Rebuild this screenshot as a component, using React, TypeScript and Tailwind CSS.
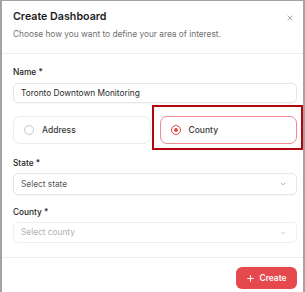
import React from "react";

function Chevron({ color }: { color: string }) {
  return (
    <svg width="6" height="6" viewBox="0 0 10 10">
      <path d="M2 3.5 L5 6.5 L8 3.5" stroke={color} strokeWidth="1.4" fill="none" strokeLinecap="round" strokeLinejoin="round" />
    </svg>
  );
}

export default function App() {
  return (
    <div
      className="w-[305px] h-[292px] bg-white border-t border-l-2 border-r-2 border-[#a3a3a3] flex flex-col overflow-hidden"
      style={{ fontFamily: "Inter, 'Noto Sans', sans-serif" }}
    >
      <div className="pl-[11px] pr-[6px] pt-[10px] h-[53px] border-b border-[#ececec] relative shrink-0">
        <div className="text-[10.7px] font-semibold text-[#1c1c1c] leading-[12px]">Create Dashboard</div>
        <div className="text-[8.3px] text-[#707070] leading-[12px] mt-[5px]">Choose how you want to define your area of interest.</div>
        <svg className="absolute left-[285px] top-[14px]" width="6" height="6" viewBox="0 0 10 10">
          <path d="M1.5 1.5 L8.5 8.5 M8.5 1.5 L1.5 8.5" stroke="#9a9a9a" strokeWidth="1.4" strokeLinecap="round" />
        </svg>
      </div>
      <div className="pl-[11px] pr-[6px] pt-[12px] h-[203px] flex flex-col shrink-0">
        <div className="text-[8.3px] font-medium text-[#222] leading-[12px]">Name *</div>
        <div className="mt-[5px] h-[20px] rounded-[5px] border border-[#e6e6e6] px-[7px] flex items-center text-[8.3px] text-[#2a2a2a] shadow-[0_1px_1px_rgba(0,0,0,0.03)]">
          Toronto Downtown Monitoring
        </div>
        <div className="mt-[13px] grid grid-cols-2 gap-[9px] relative">
          <div className="h-[28px] rounded-[7px] border border-[#ececec] flex items-center pl-[10px] gap-[8px]">
            <span className="w-[10px] h-[10px] rounded-full border border-[#c9c9c9]" />
            <span className="text-[8.5px] font-medium text-[#3a3a3a]">Address</span>
          </div>
          <div className="h-[28px] rounded-[7px] border border-[#f08a8f] flex items-center pl-[10px] gap-[8px]">
            <span className="w-[10px] h-[10px] rounded-full border border-[#e5484d] flex items-center justify-center">
              <span className="w-[4px] h-[4px] rounded-full bg-[#e5484d]" />
            </span>
            <span className="text-[8.5px] font-medium text-[#3a3a3a]">County</span>
          </div>
          <div className="absolute left-[139px] top-[-11px] w-[151px] h-[45px] border-2 border-[#b3070d] pointer-events-none" />
        </div>
        <div className="mt-[13px] text-[8.3px] font-medium text-[#222] leading-[12px]">State *</div>
        <div className="mt-[4px] h-[22px] rounded-[5px] border border-[#e6e6e6] pl-[7px] pr-[10px] flex items-center justify-between text-[8.3px] text-[#5a5a5a] shadow-[0_1px_1px_rgba(0,0,0,0.03)]">
          <span>Select state</span>
          <Chevron color="#a0a0a0" />
        </div>
        <div className="mt-[11px] text-[8.3px] font-medium text-[#222] leading-[12px]">County *</div>
        <div className="mt-[4px] h-[21px] rounded-[5px] border border-[#efefef] pl-[7px] pr-[10px] flex items-center justify-between text-[8.3px] text-[#b0b0b0]">
          <span>Select county</span>
          <Chevron color="#c4c4c4" />
        </div>
      </div>
      <div className="flex-1 border-t border-[#ececec] flex items-start justify-end pr-[6px] pt-[9px]">
        <button className="h-[22px] w-[61px] rounded-[6px] bg-[#e5484d] text-white text-[8.4px] font-semibold flex items-center justify-center gap-[6px]">
          <svg width="7" height="7" viewBox="0 0 10 10">
            <path d="M5 1 V9 M1 5 H9" stroke="white" strokeWidth="1.4" strokeLinecap="round" />
          </svg>
          Create
        </button>
      </div>
    </div>
  );
}
